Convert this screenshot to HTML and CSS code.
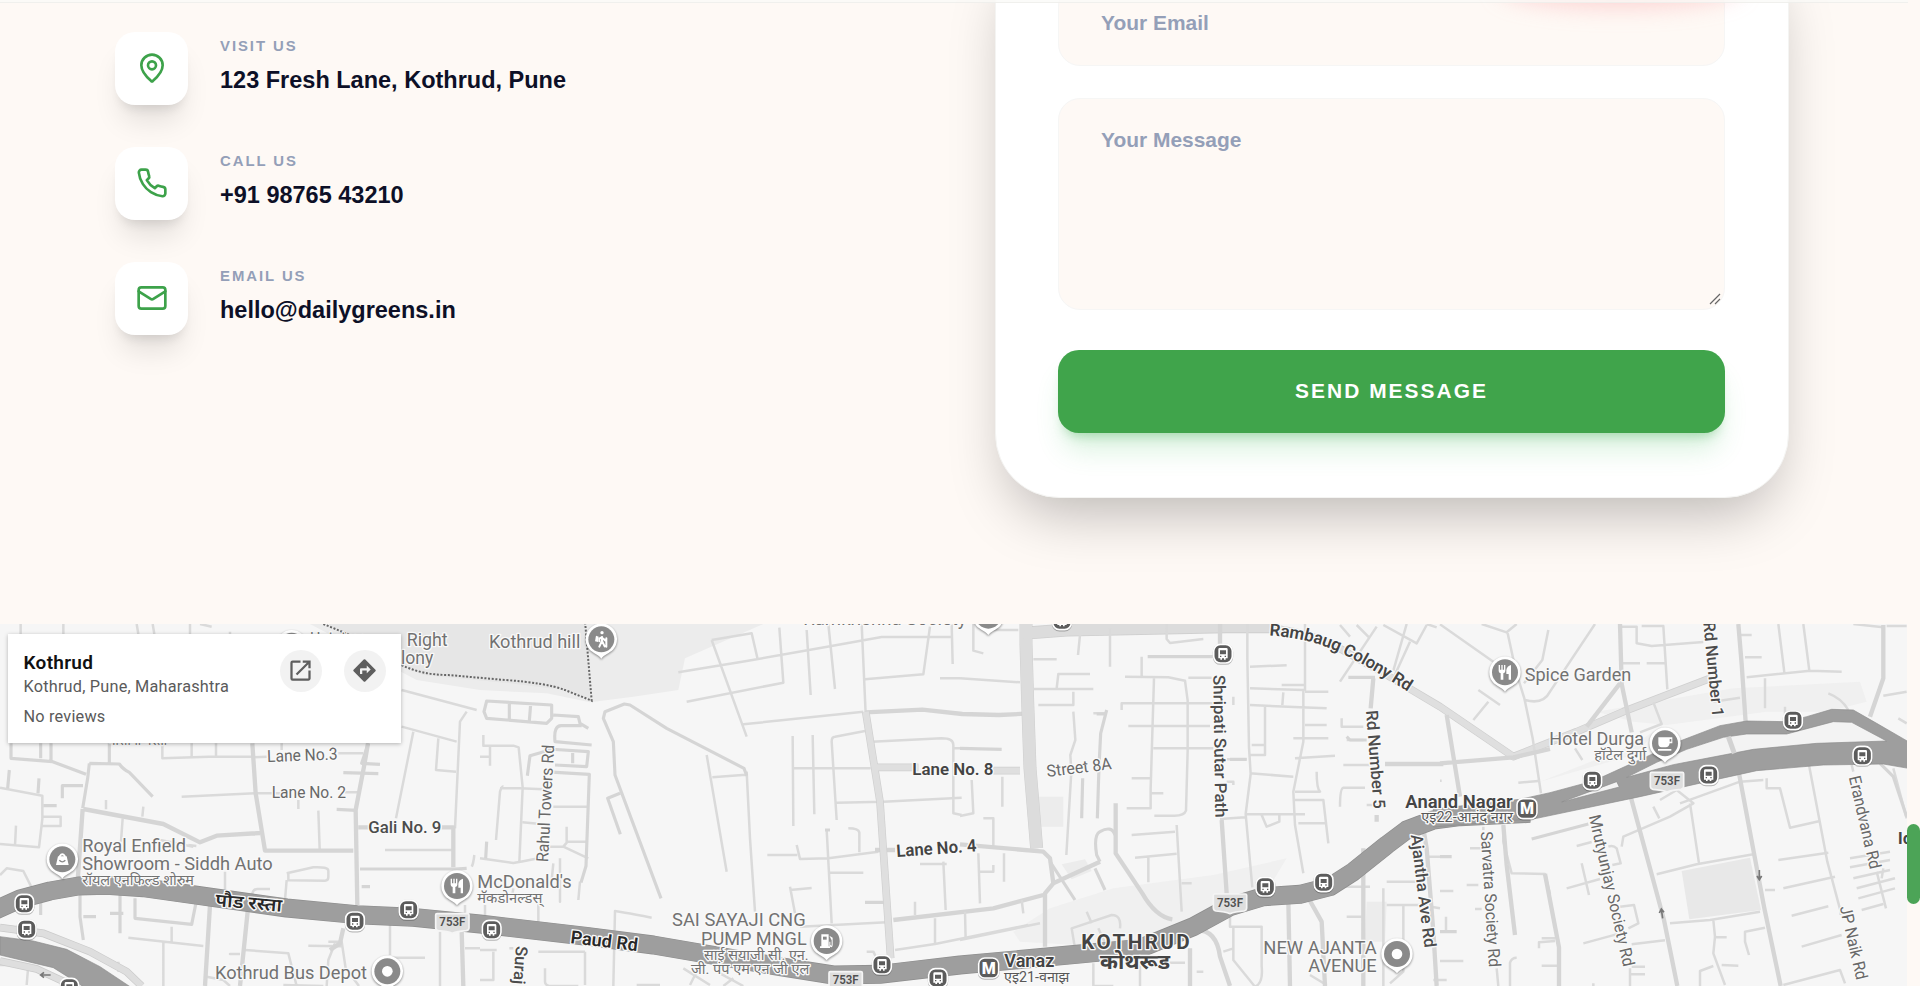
FILE: index.html
```html
<!DOCTYPE html>
<html lang="en">
<head>
<meta charset="utf-8">
<title>Daily Greens – Contact</title>
<link rel="stylesheet" href="styles.css">
</head>
<body>
<div class="page">
  <div class="topbar"></div>
  <section class="contact">
    <ul class="info">
      <li class="info-row">
        <span class="info-icon"><svg class="stroke-icon" viewBox="0 0 24 24"><path d="M20 10c0 4.993-5.539 10.193-7.399 11.799a1 1 0 0 1-1.202 0C9.539 20.193 4 14.993 4 10a8 8 0 0 1 16 0"/><circle cx="12" cy="10" r="3"/></svg></span>
        <span class="info-text"><span class="label">VISIT US</span><span class="value">123 Fresh Lane, Kothrud, Pune</span></span>
      </li>
      <li class="info-row">
        <span class="info-icon"><svg class="stroke-icon" viewBox="0 0 24 24"><path d="M22 16.92v3a2 2 0 0 1-2.18 2 19.79 19.79 0 0 1-8.63-3.07 19.5 19.5 0 0 1-6-6 19.79 19.79 0 0 1-3.07-8.67A2 2 0 0 1 4.11 2h3a2 2 0 0 1 2 1.72 12.84 12.84 0 0 0 .7 2.81 2 2 0 0 1-.45 2.11L8.09 9.91a16 16 0 0 0 6 6l1.27-1.27a2 2 0 0 1 2.11-.45 12.84 12.84 0 0 0 2.81.7A2 2 0 0 1 22 16.92z"/></svg></span>
        <span class="info-text"><span class="label">CALL US</span><span class="value">+91 98765 43210</span></span>
      </li>
      <li class="info-row">
        <span class="info-icon"><svg class="stroke-icon" viewBox="0 0 24 24"><rect x="2" y="4" width="20" height="16" rx="2"/><path d="m22 7-8.97 5.7a1.94 1.94 0 0 1-2.06 0L2 7"/></svg></span>
        <span class="info-text"><span class="label">EMAIL US</span><span class="value">hello@dailygreens.in</span></span>
      </li>
    </ul>
    <form class="card">
      <input class="field" type="email" placeholder="Your Email">
      <div class="message-wrap">
        <textarea class="field message" placeholder="Your Message"></textarea>
        <svg class="grip" viewBox="0 0 12 12"><path d="M1 11L11 1M6 11l5-5"/></svg>
      </div>
      <button class="send" type="button">SEND MESSAGE</button>
    </form>
    <div class="glow"></div>
  </section>

  <section class="map">
    <svg class="map-canvas" viewBox="0 27 5721 1086">
      <defs>
        <g id="bus">
          <rect class="badge" x="-28" y="-28" width="56" height="56" rx="20"/>
          <path fill="#fff" d="M-14-13q0-4 4-4h20q4 0 4 4v27h-6v4h-5v-4h-6v4h-5v-4h-6z"/>
          <path fill="#5c5c5c" d="M-9-10h18v12h-18zM-9 6h4v4h-4zM5 6h4v4h-4z"/>
        </g>
        <g id="pin">
          <path class="pin-shape" d="M0 58C-8 46-25 42-36 30A47 47 0 1 1 36 30C25 42 8 46 0 58z"/>
          <circle class="pin-dot" r="39"/>
        </g>
        <g id="fork" fill="#fff"><path d="M-19-22h4v14h4v-14h4v14h4v-14h4v18q0 5-6 7v19h-8v-19q-6-2-6-7zM18-22v44h-7v-17h-7v-12q2-12 14-15z"/></g>
        <g id="shield">
          <path d="M-50-21q0-4 4-4h92q4 0 4 4v38q0 7-8 9-28 2-42 8-14-6-42-8-8-2-8-9z"/>
          <text class="shield-text" y="13" textLength="78" lengthAdjust="spacingAndGlyphs">753F</text>
        </g>
        <path id="rambaug" d="M3808 62Q3920 68 4010 108Q4100 150 4235 238"/>
      </defs>
      <rect class="land" y="27" width="5721" height="1086"/>

      <g class="park">
        <path d="M930 27H2290L2180 75 2055 130 2035 225 1900 245 1770 262 1640 235 1440 225 1250 195z" />
        <path class="park-dark" d="M985 27H1755L1772 255 1690 225 1530 205 1270 180 1205 150z"/>
        <path d="M3110 545h80v90h-75zM3185 748l70-15 20 35-60 25z"/>
        <path class="faint" d="M3150 880L3340 820 3640 780 3860 730 3800 830 3500 960 3400 1000 3060 980 3040 950zM4790 290L5200 220 5580 200 5600 260 5480 290 5300 290 5000 330 4900 320zM4620 500L4900 390 4990 330 4900 420z"/>
        <path class="park-dark soft" d="M5045 768L5250 728 5283 885 5068 913z"/>
        <path d="M4100 860h60l-5 120h-60z"/>
      </g>

      <!-- Minor streets, western half -->
      <g class="street">
        <path d="M62 27v30M190 27v30M410 27l5 30M458 27l5 30M570 27v30M600 27l35 8M690 50v10"/>
        <path d="M487 385v45l140-5h130M575 385v40M648 385v40M1015 415h75M800 425l-40 2M845 385v20M545 545l220-10h80M1035 532h40M895 555v27M955 587l4 115M1155 705h205M0 518l127 24v70l-10 85-117-10M48 632l-3 60M127 605h55v28h-55M318 555v28M368 610l-5 70M430 575l-3 30M565 690l24 3M1205 225l225 60M1205 335l165 45M1400 290l-20 30-15 320M1240 350l-52 260M1315 370l-7 95 60 5M1450 360v32h90l16 5 12 120-10 225M1470 392v60M1440 425h30"/>
        <path d="M675 770v60M860 795l-5 60M755 850q0-30 20-28h35M580 695l-100-20M860 775l80-18q45-2 45 10v20q0 10-10 10l-110-1V770M0 780l20-20 50 8 25 50M1415 755q5-8 8-35M385 968l225 25M490 980v133M620 1085l50 10 20 18M700 1017h-10 30M735 1005l130 10 25 98M925 992l100 2M1170 930v90M1175 1028h100M1320 950v163M985 980h40l12 80 40 53M1005 985l-20 50-5 78M1395 1000h45M80 1050h-80M85 1050l-5 60M355 1040v30M850 1110l120 3M515 935v50M1395 870v60"/>
        <path d="M1500 520h60l70 3M1567 622l55 5M1660 575h105M1650 695h40l75 35M1700 635v45h60M1690 695l15-18M1680 730v130l-0-30M1740 800l-5 55M1440 730l100 14q20-3 80-15M1660 745l-5 50M1615 860v60M1510 515q-5-2-10 15l-12 145M1540 820l-3 20M1440 1005h50M1480 1010v85h-40M1635 1100q0 13 20 13l80 0M1755 1010h-140M1755 1010v100M1635 1060v40M1455 870v30"/>
        <path d="M1840 1113l5-225q5 0 110 20M2120 420l60 350M2137 487l100-8M2240 470l10 200 15 220M2035 172l205-34 225-40 180-32h210M2060 260l290-57-12-165M2135 75l120-20 18 78M2135 75l105 290M2230 328l360-38M2420 45l12 195M2485 27l20 195M2585 27l12 270M2790 35l-20 143-175 15M2820 190h60M2855 27l3 120"/>
        <path d="M2378 363l2 270M2438 360l5 238M2510 615l-15-235q0-15 10-15l90-17M2382 460h230M2510 563l140-3 235-12M2615 380l210-10q35 0 35 20v205l25 5M2860 400h40M2390 690l10 42 85-2 150-20M2302 720h90M2480 645l15 280M2490 773h100M2370 815l15 80M2370 825l65-6M2545 640q30 0 33 12v60M2760 747h80M2830 740l7 145M2685 1005l120-18 280-57M2805 910v75M2745 860v40M2600 1010h20l10 20M2400 935l260-13M2100 1050l-30 60M2050 1060l80 50M2200 1090l-30 23M2160 1075l70 38M1910 1110h70M1540 1000l-12 0"/>
      </g>
      <g class="street thick">
        <path d="M33 385v45l125 10 100 38M268 445l90 2q10 15 30 25l70 73M122 385v45M153 385v50M328 385v58M268 445l-5 45-15 90M28 465l-5 55M117 490l-3 45M187 550v-38h62M130 572h40M1105 385l-20 60 55 3M1030 473l105 3M1010 583l60 3M1085 815h25M1080 762h285l35-2"/>
        <path d="M240 840v65l10 70M250 905h38M330 895h40M360 840v115M122 860v40M405 850l0 60 170 18 12-60"/>
        <path class="wide" d="M757 385l10 150 28 172h265M1072 870l-5-285 25-130 12-70M250 582l240 45 110 55 50-20 130-8M248 582l-15 215M1075 637h35M1325 637h35v120M630 870l-15 243M745 870l-25 243M1385 950l5 163M1030 940l-10 45-30 20"/>
        <path d="M1460 258l195 12 0 40-15 15-180-15-8-20zM1528 262v50M1592 268l-4 50M1660 300l75 5 5 20 25 15M1775 390l-110-10q-5-50 20-48l60 0M1645 402l120 8-5 45-95-5M1718 405v40M1630 470l138 8-10 275-15 50M1660 402l-70 20-8 60"/>
        <path d="M1983 850L1845 480 1840 380 1810 310 1815 290 1873 267 1890 270 2000 340 2232 460 2240 482M1860 535l-37 15 38 108M1460 680l-3 50M2595 862h60M2475 645h15"/>
        <path class="wide" d="M2597 292l170-8 120 13 110 3 80-4M2625 705h60M2680 915l300-35 150-40"/>
      </g>
      <g class="arterial">
        <path class="edge" d="M2597 290L2640 560 2672 1030M2625 457h130M2980 467h80M3840 43Q3930 55 4010 95L4160 180 4320 275 4540 425 4730 350 4870 290 5130 190"/>
        <path class="broad edge2" d="M3078 27v60l5 173 7 200 20 240M3070 55l130-10 480-10h160"/>
        <path d="M2597 290L2640 560 2672 1030M2625 457h130M2980 467h80M3840 43Q3930 55 4010 95L4160 180 4320 275 4540 425 4730 350 4870 290 5130 190"/>
        <path class="broad" d="M3078 27v60l5 173 7 200 20 240"/>
        <path class="mid" d="M3070 55l130-10 480-10h160"/>
      </g>

      <!-- Minor streets, central area -->
      <g class="street" transform="translate(1440 0)">
        <path d="M1480 27v80l30 8M1540 45h75M1800 60l-6 60M1890 40v115M1660 133h70M1660 222h180M1730 220l5-43h95M1675 270h105v-40M1440 190l180 12M1780 290l6 85-15 45 3 50-15 250M1840 295h40M1475 495l5 100-40 8M1567 485v90M1495 715l5 150M1510 610h30v90M1500 770h40v-20M1572 715v85M1455 890l2 85M1440 975l240-50M1625 855l5 40M1985 125v60M1955 490h60M2015 535h35M1940 580h72v-60l10-330M1935 185l130 2 50 10 8 60v150l-5 180q-5 15-35 15h-60M1925 285v-20h300M1945 333h245M2020 400h180M1955 660l130-10M2090 630l15 260M1965 728l125-12M2005 725v77M2105 805h30M2060 27v45l10 12 100-12M2125 188h70"/>
        <path d="M2302 27v100l5 270 5 80-15 120 20 220M2310 155l110-4M2310 220l160 5v155l-30 150 5 100 25 145M2310 270l150 7 80 3M2315 390h40v30h-45M2355 275v140M2410 232l-3 38M2405 210h70M2475 27v200M2475 230h70M2475 330h65M2440 370h105M2445 430l120-8M2310 475l130 10M2240 500l20 0v10M2260 270v-25M2510 470q0 50 10 60h-75M2445 555h85l15 130M2455 625h80M2295 598h180M2345 600l15 35 38-15v-22M2220 612l75-5M2240 433h60"/>
        <path d="M2580 200l110-165M2740 190l50-110M2585 310v25h65M2650 375h-50M2590 450h90M2580 575q0-55 10-57h65M2720 570h-60M2580 30l30 35M2630 30l40 40M2710 30l100 55 30-55M2780 27l-40 140M2840 27l30 10M2580 815h90M2645 730h30M2720 800h110M2600 905h45M2710 820v293M2720 870h100l60 10M2770 870v200l-40 35M2840 725h60M2250 895v40h95v120q5 50-20 60l-65-80v-100M2260 1000l-30 10M1885 1005l-30-65M1785 1000l-10-60 120-40q30 0 25 40M1820 890l15 35M1980 1040v73M1840 1045v68h60M2150 1070h20M2045 1043h70M2490 1080l50 30M2860 1095h40"/>
      </g>
      <g class="street thick" transform="translate(1440 0)">
        <path d="M1440 400l125 3M1880 285l-18 70-5 100-5 155M1850 297h30M1808 490l-3 120M2003 125h195M2250 433h50M2605 187h80M2600 365l10 10h50M1860 740l-10-20q-10-60 10-70 35-20 45 10M1710 740l75 115M1845 760l30 65"/>
        <path class="wide" d="M1907 565v150l80 120q40 70 90 78M1440 688l250 22 20 20 10 75-25 30v160M1720 805l140-65M2225 615l15 220M2220 27v110M2480 840l45 80 10 193M2425 855l5 258M2650 700v413M2830 640l10 60 20 250 10 163M2715 447h175M2680 190l-8 90M2150 945q60 0 70 80l30 88M2130 1000v113M2690 600v20"/>
      </g>

      <!-- Minor streets, eastern area -->
      <g class="street" transform="translate(4320 0)">
        <path d="M0 28L160 140M125 27l75 25 30-25M203 55l25 115 25 80 25 120 25 165M325 45l-18 90-55 70M465 27L330 230Q310 270 255 255M115 225l65 45M145 260l-45 55M545 35h45v50l45 8 155-12M605 33h65l12 190M545 145h55M620 145h60M900 60h35M915 127h50M1015 27l18 145M1090 27l18 140M975 190v90M920 187l190-20 95 3M640 262l25 65-65 25M1165 235q40 15 60 50M1330 242l70-12M1340 33h60M1240 27l90 10M1375 310l25 15M1035 275v40M820 260l80-12M405 400l22 35"/>
        <path d="M0 497h5M235 503l60-5M640 575l18 35M660 555l50-30 50 40-70 40-140 60-5 30M750 565l27 180M650 778l120-30 170-30M690 925l120-10 150-25M820 915l5 50-5 50 35 95M825 967h35M845 1050l50 2M975 938l-60 12 0 30 12 40M780 1113v-45l40-15M975 825h30M1030 820l155-35M1015 735l150-22M1055 902l110-28M1085 995l120-35M1030 1110l170-45 15 40M980 490v30h40l30 118 90-20M970 495l-70 5-180 65"/>
        <path d="M1107 450l55 290 40 150 0 10M1330 760l-5 30M1230 730l120-20M1230 757l120-22M1240 790l110-25M1250 820l115-30M1255 850l110-30M1265 885l65-18M1310 770l28 110M90 700h35M80 810h35M0 828h40M105 882h20M0 1038h70M1235 450l5 20M18 905v45M410 693l45-12M425 745l22 95M380 820l100-28M505 695q15-5 25 5l12 45-25 5M540 875l42-5 13 55-30 15M430 985l110-30M575 988l100-12M305 970h40M345 978l-48 4v18M575 1055h40M570 1078h45M570 1060v53M210 1113v-70q5-15 20-15M305 1052h50M460 1105v8M130 635v10M190 630v50l25 95 100 2 15 60M170 1060l5 53M1360 460l40 150"/>
      </g>
      <g class="street thick" transform="translate(4320 0)">
        <path class="wide" d="M540 27l5 180 30 145M440 335l100-130M895 27l10 120 12 175M1330 30v160l-40 115M20 300l40 245M190 630l10 120 25 210M315 777l42 220v116M572 545l100 370 40 198M897 475l75 400 50 238M865 365l20 50M0 445l220-18 110-25"/>
        <path d="M1320 445l40 40 40 120M0 725h35M275 672l170-45M0 950h50"/>
      </g>

      <!-- Main corridor -->
      <path class="service edge" d="M0 938L130 955 270 1010 380 1070 425 1113M0 1038l110 24 110 51"/>
      <path class="service" d="M0 938L130 955 270 1010 380 1070 425 1113M0 1038l110 24 110 51"/>
      <g class="highway">
        <path class="casing" d="M-20 888L60 852 150 828 235 813 320 811 430 818 600 842 860 879 1070 899 1240 907 1440 927 1760 964 1960 990 2100 1014 2340 1055 2500 1080 2640 1078 2880 1050 3230 1018 3420 1000 3580 935 3690 875 3790 845 3900 838 3990 815 4060 770 4160 690 4220 645 4300 615 4380 605 4590 595"/>
        <path d="M-20 888L60 852 150 828 235 813 320 811 430 818 600 842 860 879 1070 899 1240 907 1440 927 1760 964 1960 990 2100 1014 2340 1055 2500 1080 2640 1078 2880 1050 3230 1018 3420 1000 3580 935 3690 875 3790 845 3900 838 3990 815 4060 770 4160 690 4220 645 4300 615 4380 605 4590 595"/>
        <path class="solid" d="M0 965L100 978 200 1003 300 1055 390 1115H250L160 1058 0 1020z"/>
      </g>
      <g class="solid" transform="translate(4320 0)">
        <path d="M-20 582L240 553 330 533 460 498 620 425 720 378 840 332 920 318 1040 320 1100 305 1175 283 1240 285 1310 325 1405 380V460L1330 447 1150 450 950 467 800 500 600 545 290 610-20 636z"/>
        <path class="gap" d="M560 487L650 442 740 403 850 367 920 357 1040 357 1180 320 1235 322 1340 378 1130 385 940 403 700 449zM365 561L530 500 538 516z"/>
        <path class="crossing" d="M865 365l18 50"/>
      </g>
      <path class="trail" d="M970 27L1050 60M1205 150q60 30 140 30l170 15q120 8 180 30l80 32-20-240"/>
      <g class="arrow"><path d="M152 1080h-30m10-8l-10 8 10 8M5278 765v28m-7-10l7 11 7-11M4988 910l-4-28m-6 12l6-12 8 10"/></g>

      <!-- Place names -->
      <g class="poi">
        <text x="1220" y="94" textLength="123" lengthAdjust="spacingAndGlyphs">Right</text>
        <text x="1203" y="148" textLength="97" lengthAdjust="spacingAndGlyphs">lony</text>
        <text x="930" y="90" textLength="170" lengthAdjust="spacingAndGlyphs">Hutatma</text>
        <text x="247" y="710" textLength="311" lengthAdjust="spacingAndGlyphs">Royal Enfield</text>
        <text x="247" y="765" textLength="571" lengthAdjust="spacingAndGlyphs">Showroom - Siddh Auto</text>
        <text class="deva" x="247" y="810" textLength="335" lengthAdjust="spacingAndGlyphs">रॉयल एनफिल्ड शोरुम</text>
        <text class="deva" x="325" y="390" textLength="176" lengthAdjust="spacingAndGlyphs">गोसावी वस्ती</text>
        <text x="645" y="1093" textLength="456" lengthAdjust="spacingAndGlyphs">Kothrud Bus Depot</text>
        <text x="1467" y="98" textLength="274" lengthAdjust="spacingAndGlyphs">Kothrud hill</text>
        <text x="1432" y="818" textLength="283" lengthAdjust="spacingAndGlyphs">McDonald's</text>
        <text class="deva" x="1432" y="863" textLength="195" lengthAdjust="spacingAndGlyphs">मॅकडोनल्डस्</text>
        <text x="2016" y="934" textLength="401" lengthAdjust="spacingAndGlyphs">SAI SAYAJI CNG</text>
        <text x="2103" y="990" textLength="317" lengthAdjust="spacingAndGlyphs">PUMP MNGL</text>
        <text class="deva" x="2112" y="1034" textLength="314" lengthAdjust="spacingAndGlyphs">साई सयाजी सी. एन.</text>
        <text class="deva" x="2073" y="1078" textLength="355" lengthAdjust="spacingAndGlyphs">जी. पंप एम एन जी एल</text>
        <text x="2410" y="30" textLength="490" lengthAdjust="spacingAndGlyphs">Ramkrishna Society</text>
        <text x="3790" y="1016" textLength="340" lengthAdjust="spacingAndGlyphs">NEW AJANTA</text>
        <text x="3925" y="1071" textLength="205" lengthAdjust="spacingAndGlyphs">AVENUE</text>
        <text x="4574" y="198" textLength="320" lengthAdjust="spacingAndGlyphs">Spice Garden</text>
        <text x="4648" y="390" textLength="284" lengthAdjust="spacingAndGlyphs">Hotel Durga</text>
        <text class="deva" x="4783" y="435" textLength="156" lengthAdjust="spacingAndGlyphs">हॉटेल दुर्गा</text>
      </g>
      <g class="road-name">
        <text transform="translate(802 441) rotate(-2)" textLength="211" lengthAdjust="spacingAndGlyphs">Lane No.3</text>
        <text x="815" y="548" textLength="223" lengthAdjust="spacingAndGlyphs">Lane No. 2</text>
        <text transform="translate(1644 742) rotate(-87)" textLength="352" lengthAdjust="spacingAndGlyphs">Rahul Towers Rd</text>
        <text transform="translate(3142 486) rotate(-7)" textLength="196" lengthAdjust="spacingAndGlyphs">Street 8A</text>
        <text transform="translate(4442 650) rotate(86.5)" textLength="408" lengthAdjust="spacingAndGlyphs">Sarvatra Society Rd</text>
        <text transform="translate(4766 604) rotate(77)" textLength="465" lengthAdjust="spacingAndGlyphs">Mrutyunjay Society Rd</text>
        <text transform="translate(5546 487) rotate(77)" textLength="285" lengthAdjust="spacingAndGlyphs">Erandvana Rd</text>
        <text transform="translate(5519 877) rotate(77)" textLength="225" lengthAdjust="spacingAndGlyphs">JP Naik Rd</text>
      </g>
      <g class="road-name strong">
        <text x="1105" y="655" textLength="219" lengthAdjust="spacingAndGlyphs">Gali No. 9</text>
        <text transform="translate(1548 992) rotate(94)" textLength="115" lengthAdjust="spacingAndGlyphs">Suraj</text>
        <text transform="translate(3640 180) rotate(89.2)" textLength="428" lengthAdjust="spacingAndGlyphs">Shripati Sutar Path</text>
        <text transform="translate(4098 287) rotate(85.5)" textLength="296" lengthAdjust="spacingAndGlyphs">Rd Number 5</text>
        <text transform="translate(4232 660) rotate(83)" textLength="342" lengthAdjust="spacingAndGlyphs">Ajantha Ave Rd</text>
        <text transform="translate(5110 22) rotate(84.5)" textLength="286" lengthAdjust="spacingAndGlyphs">Rd Number 1</text>
      </g>
      <g class="road-name bold">
        <text transform="translate(645 873) rotate(5)" textLength="200" lengthAdjust="spacingAndGlyphs" class="dark">पौड रस्ता</text>
        <text transform="translate(1710 984) rotate(7)" textLength="203" lengthAdjust="spacingAndGlyphs" class="dark">Paud Rd</text>
        <text x="2737" y="480" textLength="243" lengthAdjust="spacingAndGlyphs">Lane No. 8</text>
        <text transform="translate(2690 726) rotate(-4)" textLength="241" lengthAdjust="spacingAndGlyphs">Lane No. 4</text>
        <text class="curved"><textPath href="#rambaug">Rambaug Colony Rd</textPath></text>
        <text class="station" x="4216" y="578" textLength="322" lengthAdjust="spacingAndGlyphs">Anand Nagar</text>
        <text class="station" x="3013" y="1057" textLength="150" lengthAdjust="spacingAndGlyphs">Vanaz</text>
        <text x="5693" y="686" textLength="45" lengthAdjust="spacingAndGlyphs">Id</text>
      </g>
      <g class="poi">
        <text class="deva dk" x="3012" y="1102" textLength="196" lengthAdjust="spacingAndGlyphs">एइ21-वनाझ</text>
        <text class="deva dk" x="4264" y="622" textLength="275" lengthAdjust="spacingAndGlyphs">एइ22-आनंद नगर</text>
      </g>
      <text class="town" x="3244" y="1003" textLength="325">KOTHRUD</text>
      <text class="town" x="3300" y="1062" textLength="210" lengthAdjust="spacingAndGlyphs">कोथरूड</text>

      <use href="#pin" x="875" y="92"/>
      <use href="#pin" x="187" y="733"/><path fill="#fff" d="M168 750l6-26h26l6 26zM177 728v-6q10-14 20 0v6h-5v-4q-5-6-10 0v4z"/><path d="M178 736q9 9 18 0" stroke="#8a8a8a" stroke-width="4" fill="none"/>
      <use href="#pin" x="1371" y="813"/><use href="#fork" x="1371" y="813"/>
      <use href="#pin" x="1162" y="1069"/><circle cx="1162" cy="1069" r="16" fill="#fff"/>
      <use href="#pin" x="1804" y="73"/>
      <path fill="none" stroke="#fff" stroke-width="6" stroke-linecap="round" d="M1806 66v12l-8 17M1806 78l8 16M1806 66l-8 5v8M1808 70l8 6M1819 70v25"/><circle cx="1806" cy="53" r="5" fill="#fff"/><path d="M1788 62l8 3-2 16-9-2z" fill="#fff"/>
      <use href="#pin" x="2480" y="978"/><path fill="#fff" d="M2464 958h22v36h4v5h-30v-5h4zM2488 962l10 6v22q0 8-6 6l-4-4v-12h3v10l4 2v-16z"/><path fill="#8a8a8a" d="M2469 965h11v9h-11z"/>
      <use href="#pin" x="2965" y="2"/><use href="#pin" x="4191" y="1017"/><circle cx="4191" cy="1017" r="16" fill="#fff"/>
      <use href="#pin" x="4515" y="172"/><use href="#fork" x="4515" y="172"/>
      <use href="#pin" x="4995" y="385"/><path fill="#fff" d="M4975 367h42v18h-8q-2 12-12 12h-12q-10 0-10-12zM4974 402h40v5h-40z"/><path fill="#8a8a8a" d="M5009 372h5v8h-5z"/>
      <use href="#bus" x="73" y="866"/><use href="#bus" x="80" y="943"/><use href="#bus" x="208" y="1118"/>
      <use href="#bus" x="1065" y="919"/><use href="#bus" x="1226" y="884"/><use href="#bus" x="1475" y="944"/>
      <use href="#bus" x="2646" y="1049"/><use href="#bus" x="2814" y="1089"/><use href="#bus" x="3186" y="16"/>
      <use href="#bus" x="3669" y="116"/><use href="#bus" x="3796" y="815"/><use href="#bus" x="3971" y="802"/>
      <use href="#bus" x="4777" y="496"/><use href="#bus" x="5126" y="480"/><use href="#bus" x="5379" y="316"/><use href="#bus" x="5587" y="422"/>
      <g class="metro"><rect class="badge" x="2936" y="1029" width="60" height="60" rx="18"/><text x="2966" y="1076">M</text>
      <rect class="badge" x="4551" y="551" width="60" height="60" rx="18"/><text x="4581" y="598">M</text></g>
      <use class="shield" href="#shield" x="1357" y="921"/><use class="shield" href="#shield" x="2537" y="1095"/>
      <use class="shield" href="#shield" x="3690" y="862"/><use class="shield" href="#shield" x="5001" y="497"/>
    </svg>
    <div class="place">
      <div class="place-text">
        <strong class="place-name">Kothrud</strong>
        <span class="place-line">Kothrud, Pune, Maharashtra</span>
        <span class="place-line reviews">No reviews</span>
      </div>
      <div class="place-actions">
        <span class="round"><svg viewBox="0 0 24 24"><path d="M19 19H5V5h7V3H5a2 2 0 0 0-2 2v14a2 2 0 0 0 2 2h14c1.1 0 2-.9 2-2v-7h-2v7zM14 3v2h3.59l-9.83 9.83 1.41 1.41L19 6.41V10h2V3h-7z"/></svg></span>
        <span class="round"><svg viewBox="0 0 24 24"><path d="M21.71 11.29l-9-9a.996.996 0 0 0-1.41 0l-9 9a.996.996 0 0 0 0 1.41l9 9c.39.39 1.02.39 1.41 0l9-9a.996.996 0 0 0 0-1.41zM14 14.5V12h-4v3H8v-4c0-.55.45-1 1-1h5V7.5l3.5 3.5-3.5 3.5z"/></svg></span>
      </div>
    </div>
  </section>
  <div class="scroll-thumb"></div>
</div>
</body>
</html>
```
FILE: styles.css
```css
* { box-sizing: border-box; }
body { margin: 0; background: #fef9f5; font-family: "Liberation Sans", Arial, sans-serif; }
.page { position: relative; width: 1920px; height: 986px; overflow: hidden; }
.topbar { position: absolute; z-index: 3; left: 0; top: 0; width: 1908px; height: 3px; background: rgba(250, 249, 247, .75); border-bottom: 1px solid rgba(235, 235, 232, .7); }

.contact { position: relative; display: flex; justify-content: space-between; width: 1907px; height: 624px; padding: 0 118.5px 0 115px; overflow: hidden; }
.info { list-style: none; margin: 0; padding: 32px 0 0; display: flex; flex-direction: column; gap: 42px; }
.info-row { display: flex; align-items: center; gap: 32px; height: 73.2px; }
.info-icon { display: flex; align-items: center; justify-content: center; width: 73px; height: 73px; border-radius: 20px; background: #fff; box-shadow: 0 22px 28px -6px rgba(0, 0, 0, .1), 0 9px 11px -6px rgba(0, 0, 0, .11); }
.stroke-icon { width: 32px; height: 32px; margin-top: -1px; fill: none; stroke: #3da24a; stroke-width: 2; stroke-linecap: round; stroke-linejoin: round; }
.info-text { display: flex; flex-direction: column; gap: 8px; padding-bottom: 5px; }
.label { font-size: 14.9px; line-height: 20px; font-weight: 700; letter-spacing: 1.95px; color: #949fb8; }
.value { font-size: 23.5px; line-height: 32px; font-weight: 700; color: #0d1027; }

.card { width: 794px; height: 558px; margin: -60px 0 0; padding: 43px 62px 0 62.5px; display: flex; flex-direction: column; border-radius: 64px; background: #fff; border: 1px solid #f4f4f2; box-shadow: 0 28px 57px -14px rgba(0, 0, 0, .27); }
.field { display: block; width: 667px; height: 82px; flex: none; padding: 0 41px 5px 42px; border: 1px solid #f6f6f5; border-radius: 22px; outline: 0; background: #fef9f5; font: 700 20.95px/30px "Liberation Sans", Arial, sans-serif; color: #0d1027; }
.field::placeholder { color: #949fb8; opacity: 1; }
.message-wrap { position: relative; margin-top: 32px; }
.message { height: 211.5px; padding-top: 26px; resize: none; }
.grip { position: absolute; right: 5px; bottom: 5px; width: 12px; height: 12px; fill: none; stroke: #666; stroke-width: 1.2; }
.send { width: 667px; height: 83.5px; margin-top: 40px; padding: 0 0 1px; flex: none; border: 0; border-radius: 21px; background: #40a44b; color: #fff; font: 700 20.9px/30px "Liberation Sans", Arial, sans-serif; letter-spacing: 2.05px; box-shadow: 0 22px 28px -6px rgba(61, 190, 90, .2), 0 9px 11px -6px rgba(61, 162, 74, .35); }
.glow { position: absolute; left: 1500px; top: -34px; width: 240px; height: 40px; border-radius: 50%; background: rgba(250, 140, 145, .38); filter: blur(12px); }

.map { position: relative; width: 1907px; height: 362px; overflow: hidden; }
.map-canvas { display: block; width: 1907px; height: 362px; }
.land { fill: #f6f6f6; }
.park { fill: #ececec; }
.park .park-dark { fill: #e6e6e6; }
.park .soft { fill: #e8e8e8; }
.park .faint { fill: #f0f0f0; }
.street { fill: none; stroke: #dadada; stroke-width: 7.5; stroke-linejoin: round; }
.thick { stroke-width: 9.5; stroke: #d5d5d5; }
.thick .wide { stroke-width: 13; }
.arterial { fill: none; stroke: #dfdfdf; stroke-width: 19; stroke-linejoin: round; }
.arterial .edge { stroke: #cfcfcf; stroke-width: 23; }
.arterial .broad { stroke: #dcdcdc; stroke-width: 36; }
.arterial .edge2 { stroke: #cfcfcf; stroke-width: 39; }
.arterial .mid { stroke: #dcdcdc; stroke-width: 34; }
.service { fill: none; stroke: #dedede; stroke-width: 19; }
.service.edge { stroke: #cacaca; stroke-width: 23; }
.highway { fill: none; stroke: #9e9e9e; stroke-width: 53; stroke-linejoin: round; }
.highway .casing { stroke: #8d8d8d; stroke-width: 57; }
.solid, .highway .solid { fill: #9e9e9e; stroke: #8d8d8d; stroke-width: 2; }
.solid .gap { fill: #f3f3f3; }
.solid .crossing { stroke: #d2d2d2; stroke-width: 15; }
.trail { fill: none; stroke: #666; stroke-width: 6; stroke-dasharray: 6 5; }
.arrow { fill: none; stroke: #777; stroke-width: 5; }
text { font-family: Roboto, "Noto Sans Devanagari", "Noto Sans", sans-serif; paint-order: stroke; stroke: #f9f9f9; stroke-width: 8px; stroke-linejoin: round; }
.poi { fill: #727272; font-size: 54px; }
.poi .deva { font-size: 44px; }
.poi .dk { fill: #585858; }
.road-name { fill: #686868; font-size: 50px; }
.strong { fill: #4c4c4c; font-weight: 500; }
.bold { fill: #444; font-size: 52px; font-weight: 600; }
.bold .dark { fill: #282828; font-size: 54px; }
.bold .station { font-size: 55px; }
.bold .curved { font-size: 51px; letter-spacing: -.5px; }
.town { fill: #444; font-size: 62px; font-weight: 700; }
.pin-shape { fill: #fff; filter: drop-shadow(0 3px 3px rgba(0, 0, 0, .45)); }
.pin-dot { fill: #8a8a8a; }
.badge { fill: #5c5c5c; stroke: #fff; stroke-width: 5; filter: drop-shadow(0 2px 2px rgba(0, 0, 0, .4)); }
.metro text { fill: #fff; stroke: none; font-size: 48px; font-weight: 900; text-anchor: middle; }
.shield { fill: #dedede; stroke: #f5f5f5; stroke-width: 5; }
.shield-text { fill: #505050; stroke: none; font-size: 37px; font-weight: 600; text-anchor: middle; }

.place { position: absolute; left: 8px; top: 10px; width: 393px; height: 108.5px; padding: 0 15.5px; display: flex; background: #fff; box-shadow: 0 1px 4px rgba(0, 0, 0, .28); font-family: Roboto, sans-serif; }
.place-text { flex: 1; display: flex; flex-direction: column; white-space: nowrap; padding-top: 17px; }
.place-name { font-size: 19px; line-height: 24px; font-weight: 600; color: #111; letter-spacing: .3px; }
.place-line { font-size: 16.3px; line-height: 24px; color: #5a5a5a; letter-spacing: .2px; }
.reviews { margin-top: 6px; }
.place-actions { display: flex; gap: 22px; padding-top: 15.5px; }
.round { flex: none; width: 42px; height: 42px; border-radius: 50%; background: #f2f2f2; display: flex; align-items: center; justify-content: center; }
.round svg { width: 27px; height: 27px; fill: #5e5e5e; }
.scroll-thumb { position: absolute; right: 0; top: 824px; width: 13px; height: 80px; border-radius: 6.5px; background: #4ca457; }
```
